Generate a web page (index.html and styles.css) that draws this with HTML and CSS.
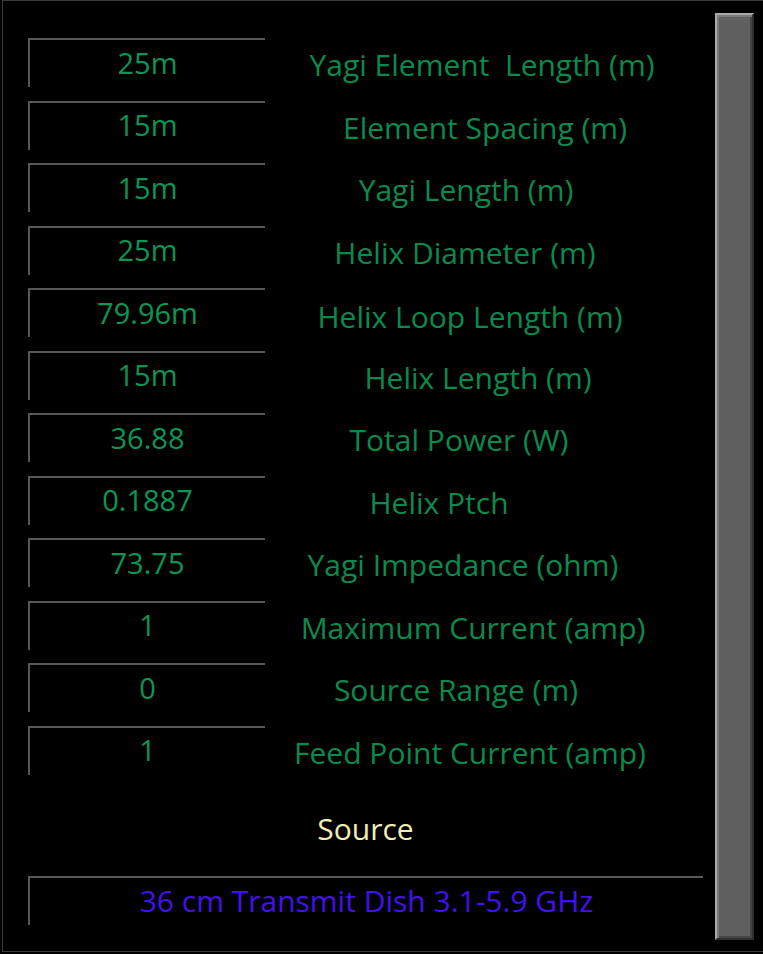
FILE: index.html
```html
<!DOCTYPE html>
<html>
<head>
<meta charset="utf-8">
<link rel="stylesheet" href="styles.css">
</head>
<body>
<div class="frame">
  <div class="content">
    <div class="rows">
      <div class="row"><div class="value">25m</div><div class="label">Yagi Element&nbsp; Length (m)</div></div>
      <div class="row"><div class="value">15m</div><div class="label">Element Spacing (m)</div></div>
      <div class="row"><div class="value">15m</div><div class="label">Yagi Length (m)</div></div>
      <div class="row"><div class="value">25m</div><div class="label">Helix Diameter (m)</div></div>
      <div class="row"><div class="value">79.96m</div><div class="label">Helix Loop Length (m)</div></div>
      <div class="row"><div class="value">15m</div><div class="label">Helix Length (m)</div></div>
      <div class="row"><div class="value">36.88</div><div class="label">Total Power (W)</div></div>
      <div class="row"><div class="value">0.1887</div><div class="label">Helix Ptch</div></div>
      <div class="row"><div class="value">73.75</div><div class="label">Yagi Impedance (ohm)</div></div>
      <div class="row"><div class="value">1</div><div class="label">Maximum Current (amp)</div></div>
      <div class="row"><div class="value">0</div><div class="label">Source Range (m)</div></div>
      <div class="row"><div class="value">1</div><div class="label">Feed Point Current (amp)</div></div>
    </div>
    <div class="source-title">Source</div>
    <div class="source-box">36 cm Transmit Dish 3.1-5.9 GHz</div>
  </div>
  <div class="scrollbar"><div class="thumb"></div></div>
</div>
</body>
</html>
```
FILE: styles.css
```css
html, body {
  margin: 0;
  padding: 0;
  background: #000;
  overflow: hidden;
}
.frame {
  margin-left: 2px;
  width: 761px;
  height: 952px;
  box-sizing: border-box;
  border-top: 1px solid #3a3a3a;
  border-left: 1px solid #3a3a3a;
  border-bottom: 1px solid #3a3a3a;
  display: flex;
}
.content {
  width: 712px;
  padding-top: 37px;
  padding-left: 25px;
  box-sizing: border-box;
}
.rows {
  display: flex;
  flex-direction: column;
  gap: 13.5px;
}
.row {
  display: flex;
  height: 49px;
}
.value {
  width: 237px;
  flex: none;
  box-sizing: border-box;
  border-top: 2px solid #575757;
  border-left: 2px solid #575757;
  display: flex;
  align-items: center;
  justify-content: center;
  padding-bottom: 3px;
  font-family: "Open Sans", "DejaVu Sans", sans-serif;
  font-size: 29px;
  color: #0c9655;
}
.label {
  width: 434px;
  flex: none;
  display: flex;
  align-items: center;
  justify-content: center;
  padding-top: 4px;
  box-sizing: border-box;
  font-family: "Open Sans", "DejaVu Sans", sans-serif;
  font-size: 30px;
  color: #0b8a4e;
  white-space: nowrap;
}
.row:nth-child(2) .label { padding-left: 6px; }
.row:nth-child(3) .label { padding-right: 32px; }
.row:nth-child(4) .label { padding-right: 34px; }
.row:nth-child(5) .label { padding-right: 24px; padding-top: 8px; }
.row:nth-child(6) .label { padding-right: 8px; }
.row:nth-child(7) .label { padding-right: 46px; }
.row:nth-child(8) .label { padding-right: 86px; }
.row:nth-child(9) .label { padding-right: 38px; }
.row:nth-child(10) .label { padding-right: 18px; }
.row:nth-child(11) .label { padding-right: 52px; }
.row:nth-child(12) .label { padding-right: 24px; }
.source-title {
  margin-top: 34px;
  width: 675px;
  text-align: center;
  font-family: "Open Sans", "DejaVu Sans", sans-serif;
  font-size: 30px;
  line-height: 40px;
  color: #f2eeb4;
}
.source-box {
  margin-top: 27px;
  width: 675px;
  height: 49px;
  box-sizing: border-box;
  border-top: 2px solid #575757;
  border-left: 2px solid #575757;
  display: flex;
  align-items: center;
  justify-content: center;
  padding-bottom: 2px;
  font-family: "Open Sans", "DejaVu Sans", sans-serif;
  font-size: 30px;
  color: #4211ee;
}
.scrollbar {
  padding-top: 12px;
  width: 39px;
}
.thumb {
  width: 39px;
  height: 927px;
  box-sizing: border-box;
  background: #5f5f5f;
  border-top: 2px solid #a9a9a9;
  border-left: 2px solid #a9a9a9;
  border-right: 2px solid #2e2e2e;
  border-bottom: 2px solid #2e2e2e;
  box-shadow: inset 2px 2px 0 #7a7a7a, inset -2px -2px 0 #454545;
}
```
